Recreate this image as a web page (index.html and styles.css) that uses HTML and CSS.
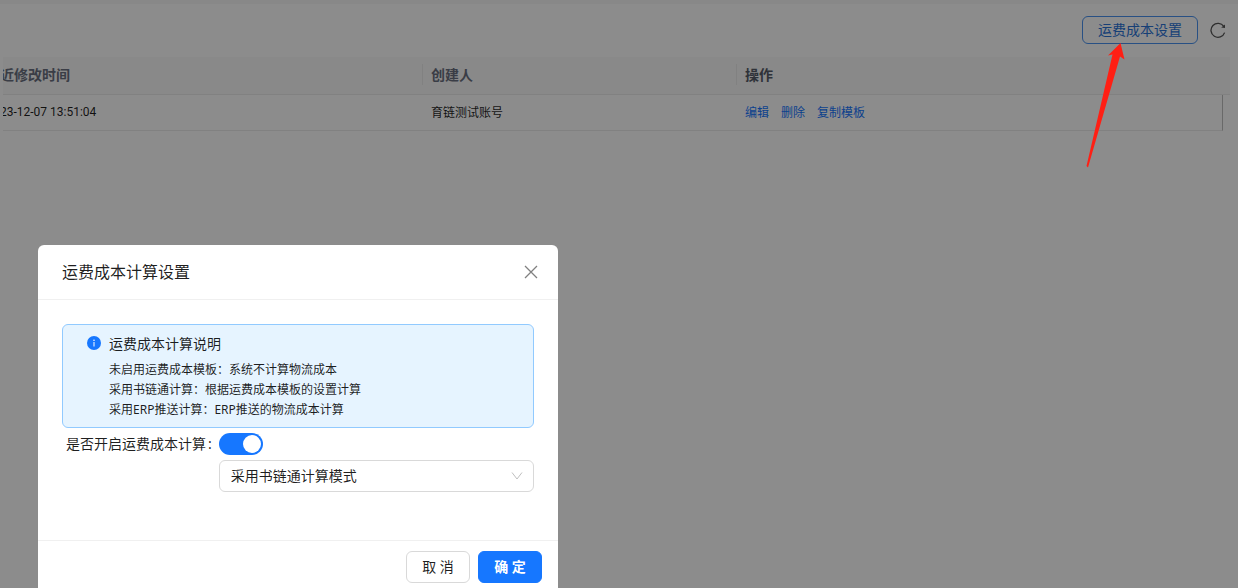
FILE: index.html
```html
<!DOCTYPE html>
<html lang="zh-CN">
<head>
<meta charset="utf-8">
<meta name="viewport" content="width=device-width, initial-scale=1">
<title>运费成本设置</title>
<link rel="stylesheet" href="styles.css">
</head>
<body>
<main class="page">
  <div class="toolbar">
    <button class="btn btn-outline" type="button">运费成本设置</button>
    <button class="icon-btn" type="button">
      <svg class="icon-reload" viewBox="0 0 16 16"><path d="M13.800 4.400A7 7 0 1 0 14.600 10.600" fill="none" stroke="currentColor" stroke-width="1.300"/><path d="M15 2.400v3.600l-3.800-.5z" fill="currentColor"/></svg>
    </button>
  </div>
  <div class="table-wrap">
    <table class="table">
      <colgroup><col class="col-time"><col class="col-user"><col><col class="col-gutter"></colgroup>
      <thead>
        <tr><th><span>近修改时间</span></th><th><span>创建人</span></th><th class="strong"><span>操作</span></th><th></th></tr>
      </thead>
      <tbody>
        <tr>
          <td class="time">23-12-07 13:51:04</td>
          <td>育链测试账号</td>
          <td class="last"><div class="actions"><a href="#">编辑</a><a href="#">删除</a><a href="#">复制模板</a></div></td>
          <td class="gutter"></td>
        </tr>
      </tbody>
    </table>
  </div>
</main>

<div class="mask">
  <section class="modal" role="dialog" aria-labelledby="modal-title">
    <header class="modal-header">
      <h2 class="modal-title" id="modal-title">运费成本计算设置</h2>
      <button class="close" type="button">
        <svg class="icon-close" viewBox="0 0 14 14"><path d="M1 1l12 12M13 1L1 13" stroke="currentColor" stroke-width="1.3" fill="none"/></svg>
      </button>
    </header>
    <div class="modal-body">
      <div class="alert">
        <svg class="icon-info" viewBox="0 0 14 14"><circle cx="7" cy="7" r="7" fill="#1677ff"/><rect x="6.5" y="6" width="1" height="4.5" fill="#fff"/><circle cx="7" cy="4.2" r=".8" fill="#fff"/></svg>
        <div class="alert-content">
          <p class="alert-title">运费成本计算说明</p>
          <p class="alert-line">未启用运费成本模板：系统不计算物流成本</p>
          <p class="alert-line">采用书链通计算：根据运费成本模板的设置计算</p>
          <p class="alert-line">采用ERP推送计算：ERP推送的物流成本计算</p>
        </div>
      </div>
      <form class="form">
        <label class="form-label" for="enable">是否开启运费成本计算<span class="colon">:</span></label>
        <input class="switch" id="enable" type="checkbox" role="switch" checked>
        <div class="select-box">
          <select class="select" aria-labelledby="modal-title"><option>采用书链通计算模式</option></select>
          <svg class="icon-down" viewBox="0 0 12 12"><path d="M1 2.5l5 6.5 5-6.5" fill="none" stroke="currentColor"/></svg>
        </div>
      </form>
    </div>
    <footer class="modal-footer">
      <button class="btn" type="button">取 消</button>
      <button class="btn btn-primary" type="button">确 定</button>
    </footer>
  </section>
</div>
<svg class="pointer" viewBox="0 0 40 126"><path d="M35.500 1L23 13.500L27.500 12.500L1.500 124L3 125.500L35 14.500L39.500 17.500Z" fill="#ff1f14"/></svg>
</body>
</html>
```
FILE: styles.css
```css
* { box-sizing: border-box; }

body {
  margin: 0;
  background: #fff;
  color: rgba(0, 0, 0, 0.88);
  font: 14px/22px "Noto Sans", "Noto Sans CJK SC", sans-serif;
}

button, select { font: inherit; color: inherit; }
p, h2 { margin: 0; }

.page { border-top: 4px solid #f7f7f7; }

.toolbar {
  display: flex;
  justify-content: flex-end;
  align-items: center;
  gap: 12px;
  padding: 12px 12px 13px;
}

.btn {
  min-width: 64px;
  height: 32px;
  padding: 0 15px;
  border: 1px solid #d9d9d9;
  border-radius: 6px;
  background: #fff;
  line-height: 22px;
}

.btn-outline {
  height: 28px;
  padding: 0 15px;
  border-color: #4a93f0;
  background: transparent;
  color: #2b74d8;
}

.btn-primary {
  border-color: #1677ff;
  background: #1677ff;
  color: #fff;
  font-weight: 700;
}

.icon-btn, .close {
  display: flex;
  padding: 0;
  border: 0;
  background: none;
}

.icon-reload { width: 16px; height: 16px; color: #555; }

.table-wrap {
  margin: 0 8px 0 3px;
  overflow: hidden;
}

.table {
  width: calc(100% + 3px);
  margin-left: -3px;
  border-collapse: separate;
  border-spacing: 0;
  table-layout: fixed;
  font-size: 12px;
}

.col-time { width: 423px; }
.col-user { width: 314px; }
.col-gutter { width: 7px; }

.table th, .table td {
  padding: 7px 8px;
  border-bottom: 1px solid #ececec;
  text-align: left;
  line-height: 21px;
}

.table th:first-child, .table td:first-child { padding-left: 0; }
.table th:last-child, .table td:last-child { padding: 0; }

.table th {
  height: 38px;
  padding-bottom: 9px;
  background: #f9f9f9;
  color: #6a7080;
  font-size: 14px;
  font-weight: 700;
}

.table th span {
  display: block;
  margin-right: -8px;
  border-right: 1px solid #ececec;
}

.table th.strong { color: #565c68; }
.table th.strong span { border: 0; }
.table td.last { border-right: 1px solid #bfbfbf; }
.table td.gutter { border: 0; }
.table td.time { font-family: Roboto, "Noto Sans CJK SC", sans-serif; }

.actions { display: flex; gap: 12px; }
.actions a { color: #1677ff; text-decoration: none; }

.mask {
  position: fixed;
  inset: 0;
  overflow: hidden;
  background: rgba(0, 0, 0, 0.45);
}

.modal {
  position: absolute;
  top: 245px;
  left: 38px;
  width: 520px;
  border-radius: 6px 6px 0 0;
  background: #fff;
}

.modal-header {
  display: flex;
  align-items: center;
  justify-content: space-between;
  padding: 15px 20px 15px 24px;
  border-bottom: 1px solid #f0f0f0;
}

.modal-title { font-size: 16px; font-weight: 400; line-height: 24px; }
.icon-close { width: 14px; height: 14px; color: #808080; }

.modal-body { padding: 24px; }

.alert {
  display: flex;
  gap: 8px;
  padding: 8px 24px 7px;
  border: 1px solid #91caff;
  border-radius: 6px;
  background: #e6f4ff;
}

.icon-info { flex: none; width: 14px; height: 14px; margin-top: 3px; }
.alert-title { margin-bottom: 5px; }
.alert-line { font-size: 12px; line-height: 20px; }

.form {
  display: grid;
  grid-template-columns: auto 1fr;
  row-gap: 5px;
  padding: 5px 0 24px 4px;
  align-items: center;
}

.colon { margin: 0 7px 0 2px; }

.switch {
  appearance: none;
  display: flex;
  justify-content: flex-end;
  width: 44px;
  height: 22px;
  margin: 0;
  padding: 2px;
  border-radius: 11px;
  background: #1677ff;
}

.switch::before {
  content: "";
  width: 18px;
  height: 18px;
  border-radius: 50%;
  background: #fff;
}

.select-box {
  grid-column: 2;
  display: grid;
  align-items: center;
}

.select-box > * { grid-area: 1 / 1; }

.select {
  appearance: none;
  width: 100%;
  height: 32px;
  padding: 0 11px;
  border: 1px solid #d9d9d9;
  border-radius: 6px;
  background: #fff;
}

.icon-down {
  justify-self: end;
  width: 12px;
  height: 12px;
  margin-right: 11px;
  color: #bfbfbf;
  pointer-events: none;
}

.modal-footer {
  display: flex;
  justify-content: flex-end;
  gap: 8px;
  padding: 10px 16px;
  border-top: 1px solid #f0f0f0;
}

.pointer {
  position: fixed;
  top: 42px;
  right: 113px;
  width: 40px;
  height: 126px;
}
```
